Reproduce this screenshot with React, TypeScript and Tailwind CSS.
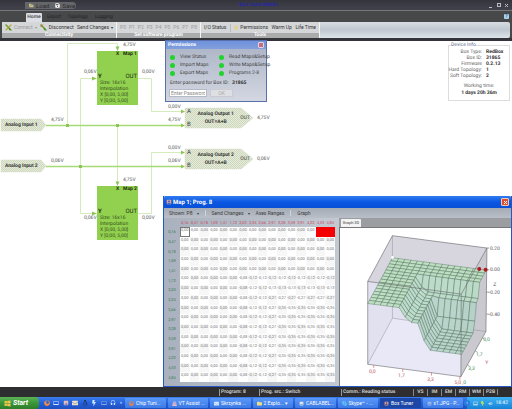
import React from "react";
import {
  FaBirthdayCake,
  FaBolt,
  FaEnvelope,
  FaFirefox,
  FaFolder,
  FaFolderOpen,
  FaLinux,
  FaSave,
  FaSkype,
  FaWindows,
} from "react-icons/fa";
import {
  MdAccountBox,
  MdComputer,
  MdHeadset,
  MdImage,
  MdVolumeUp,
} from "react-icons/md";

const axis = [
  "0,16", "0,47", "0,78", "1,09", "1,41", "1,72", "2,03", "2,34",
  "2,66", "2,97", "3,28", "3,59", "3,91", "4,22", "4,53", "4,84",
];

// lowest value allowed per column and per row, the cell takes the higher one
const colLimit = [
  0, 0, 0, 0, 0, 0, -0.08, -0.12, -0.12, -0.27, -0.35, -0.35, -0.35, -0.35,
  -0.35, -0.35,
];
const rowLimit = [
  0, 0, 0, 0, 0, -0.12, -0.13, -0.27, -0.35, -0.35, -0.35, -0.35, -0.35,
  -0.35, -0.35, -0.35,
];
const valueAt = (col: number, row: number) =>
  Math.max(colLimit[col], rowLimit[row]);

function Plug({ off }: { off?: boolean }) {
  return (
    <svg viewBox="0 0 12 12" className="size-[7px] shrink-0">
      <path d="M1 1 L11 11" stroke="#6f9a2c" strokeWidth="2.4" />
      {!off && <path d="M11 1 L1 11" stroke="#b7a437" strokeWidth="2.2" />}
      <path d="M6 5 L10 9 L7 11 Z" fill="#3f8f2a" />
      {off && <path d="M1 5 L5 1" stroke="#c2562c" strokeWidth="1.6" />}
    </svg>
  );
}

function Group({
  title,
  children,
  className,
}: {
  title: string;
  children: React.ReactNode;
  className: string;
}) {
  return (
    <section
      className={`flex flex-col border-r border-[#f4f4f4] ${className}`}
    >
      <div className="flex flex-1 items-center justify-between px-[3px] whitespace-nowrap">
        {children}
      </div>
      <h2 className="h-[5px] bg-[#a9abac] text-center text-[5px] leading-[5px] font-bold text-white">
        {title}
      </h2>
    </section>
  );
}

function Header() {
  return (
    <header className="bg-[#47484a]">
      <div className="flex h-[11px] items-center border-b border-[#77787c] bg-linear-to-b from-[#34353c] to-[#41424c]">
        <div className="ml-[25px] flex h-[7px] w-[51px] items-center gap-[6px] rounded-r-full bg-[#65666a] px-1 text-[#2c2c2c]">
          <button className="flex items-center gap-[2px]">
            <FaFolderOpen className="size-[5px] text-[#c9c08c]" />
            Load
          </button>
          <button className="flex items-center gap-[2px]">
            <FaSave className="size-[5px] text-white" />
            Save
          </button>
        </div>
        <h1 className="flex-1 text-center text-[5px] text-[#1d1dd0]">
          Box Tuner Mobile
        </h1>
        <div className="mr-[3px] ml-[48px] flex gap-[3px] text-[#b9bcc6]">
          <button aria-label="Minimize" className="flex size-[5px] items-end">
            <span className="h-px w-[3px] bg-current" />
          </button>
          <button
            aria-label="Maximize"
            className="size-[4px] border border-current"
          />
          <button aria-label="Close" className="size-[5px]">
            <svg viewBox="0 0 5 5" stroke="currentColor">
              <path d="M1 1 L4 4 M4 1 L1 4" />
            </svg>
          </button>
        </div>
      </div>

      <nav className="flex h-[11px] items-end pl-[26px] text-[5px] text-[#242424]">
        <a
          href="#home"
          className="h-[9px] w-[16px] rounded-t-[1px] bg-[#dcdfe3] text-center leading-[9px] font-bold text-[#555]"
        >
          Home
        </a>
        <a href="#export" className="ml-[5px] leading-[9px]">
          Export
        </a>
        <a href="#topology" className="ml-[6px] leading-[9px]">
          Topology
        </a>
        <a href="#logging" className="ml-[7px] leading-[9px]">
          Logging
        </a>
        <button
          aria-label="Help"
          className="mr-[3px] mb-[3px] ml-auto flex size-[5px] items-center justify-center rounded-[1px] bg-[#a9d0ee] text-[5px] leading-[5px] text-[#16406c]"
        >
          ?
        </button>
      </nav>

      <div className="mx-[2px] flex h-[16px] rounded-[2px] bg-linear-to-b from-[#d8dce2] via-[#c0c7d0] to-[#dde5eb] text-[5px] text-[#333]">
        <Group title="Connectivity" className="w-[115px] bg-[#d4d6d8]">
          <button className="flex items-center gap-[2px] text-[#9a9a9a]">
            <Plug />
            Connect
            <span className="text-[4px]">▾</span>
          </button>
          <button className="flex items-center gap-[2px]">
            <Plug off />
            Disconnect
          </button>
          <button className="flex items-center gap-[2px]">
            Send Changes
            <span className="text-[4px]">▾</span>
          </button>
        </Group>
        <Group title="Set software program" className="w-[84px] bg-[#d4d6d8]">
          {["P0", "P1", "P2", "P3", "P4", "P5", "P6", "P7", "P8"].map((p) => (
            <button key={p} className="text-[#9c9c9c]">
              {p}
            </button>
          ))}
        </Group>
        <Group title="Tools" className="w-[119px] bg-[#d4d6d8]">
          <button>I/O Status</button>
          <span className="h-[8px] w-px bg-[#bcbcbc]" />
          <button className="flex items-center gap-[2px]">
            <span className="h-[5px] w-[4px] rounded-full bg-[#e3cf9a]" />
            Permissions
          </button>
          <button>Warm Up</button>
          <button>Life Time</button>
        </Group>
      </div>
      <div className="h-[3px] bg-[#33343a]" />
    </header>
  );
}

function Wires() {
  return (
    <svg
      className="absolute top-0 left-0"
      width="280"
      height="210"
      fill="none"
    >
      <defs>
        <pattern
          id="hatch"
          width="2"
          height="2"
          patternUnits="userSpaceOnUse"
        >
          <rect width="2" height="2" fill="#e6ecd9" />
          <path d="M0 2 L2 0" stroke="#c3cfb0" strokeWidth="0.7" />
        </pattern>
      </defs>
      <g stroke="#d3ebbd" strokeWidth="1">
        <path d="M67.5 84 V2.5 H117.5 V6" />
        <path d="M117.5 84 V141" />
        <path d="M80.5 125 V37.5 H93" />
        <path d="M80.5 125 V172.5 H93" />
        <path d="M138 37.5 H151.5 V70.5 H181" />
        <path d="M138 172.5 H151.5 V111.5 H181" />
      </g>
      <g stroke="#a6da76" strokeWidth="1.4">
        <path d="M46 84.5 H182" />
        <path d="M46 125.5 H182" />
      </g>
      <g fill="#8cc556">
        <rect x="66" y="83" width="3" height="3" />
        <rect x="116" y="83" width="3" height="3" />
        <rect x="79" y="124" width="3" height="3" />
        <path d="M115.500 5.500 H119.500 L117.500 10 Z" />
        <path d="M115.500 140.500 H119.500 L117.500 145 Z" />
        <path d="M92 35.500 V39.500 L97 37.500 Z" />
        <path d="M92 170.500 V174.500 L97 172.500 Z" />
        <path d="M181 68.500 V72.500 L185 70.500 Z" />
        <path d="M181 82.500 V86.500 L185 84.500 Z" />
        <path d="M181 109.500 V113.500 L185 111.500 Z" />
        <path d="M181 123.500 V127.500 L185 125.500 Z" />
      </g>
      <g fill="url(#hatch)" stroke="#d5decb" strokeWidth="0.5">
        <path d="M1 78 H41 L46 84 L41 90 H1 Z" />
        <path d="M1 119 H41 L46 125 L41 131 H1 Z" />
        <path d="M185 67 H241 L253 77 L241 87 H185 Z" />
        <path d="M185 108 H241 L253 118 L241 128 H185 Z" />
      </g>
    </svg>
  );
}

function MapNode({ name, className }: { name: string; className: string }) {
  return (
    <div
      className={`absolute left-[97px] h-[54px] w-[41px] bg-[#92d050] px-[3px] whitespace-nowrap text-[#35521c] ${className}`}
    >
      <div className="-mr-[2px] flex h-[7px] justify-between pl-[16px] text-[5px] font-bold text-[#1e2e10]">
        <span>X</span>
        <span>{name}</span>
      </div>
      <div className="-mx-[2px] mt-[16px] flex justify-between leading-[6px] text-[#1e2e10]">
        <b>Y</b>
        <span>OUT</span>
      </div>
      <p className="text-[5px] leading-[6px]">
        Size: 16x16
        <br />
        Interpolation
        <br />
        X [0,00, 5,00]
        <br />Y [0,00, 5,00]
      </p>
    </div>
  );
}

function OutputNode({ name, className }: { name: string; className: string }) {
  return (
    <div
      className={`absolute left-[185px] flex h-[20px] w-[65px] items-center text-[#333] ${className}`}
    >
      <div className="flex h-full flex-col justify-between pl-[2px]">
        <span>A</span>
        <span>B</span>
      </div>
      <div className="flex-1 text-center text-[5px] leading-[8px] font-bold whitespace-nowrap">
        {name}
        <br />
        OUT=A+B
      </div>
      <span className="text-[5px]">OUT</span>
    </div>
  );
}

const voltages = [
  { text: "4,75V", className: "top-[1px] left-[123px]" },
  { text: "0,06V", className: "top-[28px] left-[84px]" },
  { text: "0,00V", className: "top-[28px] left-[142px]" },
  { text: "4,75V", className: "top-[76px] left-[51px]" },
  { text: "0,06V", className: "top-[117px] left-[51px]" },
  { text: "0,00V", className: "top-[63px] left-[168px]" },
  { text: "4,75V", className: "top-[76px] left-[168px]" },
  { text: "4,75V", className: "top-[74px] left-[257px]" },
  { text: "0,00V", className: "top-[104px] left-[168px]" },
  { text: "0,06V", className: "top-[117px] left-[168px]" },
  { text: "0,06V", className: "top-[115px] left-[257px]" },
  { text: "4,75V", className: "top-[136px] left-[123px]" },
  { text: "0,06V", className: "top-[174px] left-[84px]" },
  { text: "0,00V", className: "top-[174px] left-[142px]" },
];

function Diagram() {
  return (
    <>
      <Wires />
      <div className="absolute top-[81px] left-[5px] text-[5px] font-bold whitespace-nowrap text-[#333]">
        Analog Input 1
      </div>
      <div className="absolute top-[122px] left-[5px] text-[5px] font-bold whitespace-nowrap text-[#333]">
        Analog Input 2
      </div>
      <MapNode name="Map 1" className="top-[10px]" />
      <MapNode name="Map 2" className="top-[145px]" />
      <OutputNode name="Analog Output 1" className="top-[67px]" />
      <OutputNode name="Analog Output 2" className="top-[108px]" />
      {voltages.map((v, i) => (
        <span
          key={i}
          className={`absolute text-[5px] text-[#555] ${v.className}`}
        >
          {v.text}
        </span>
      ))}
    </>
  );
}

function Permissions() {
  return (
    <section className="absolute -top-px left-[165px] w-[102px] border border-[#5870ae] bg-linear-to-b from-[#aab2c4] to-[#d3d7e2] text-[5px] text-[#444]">
      <div className="flex h-[8px] items-center justify-between bg-linear-to-b from-[#6f92dc] to-[#829fdc] px-[2px] text-white">
        <b>Permissions</b>
        <button
          aria-label="Close permissions"
          className="flex size-[6px] items-center justify-center rounded-[1px] border border-[#e3d3dd] bg-[#bd6f83]"
        />
      </div>
      <ul className="mt-[5px] grid grid-cols-[49px_1fr] gap-y-[1px] pl-[4px] leading-[7px] whitespace-nowrap">
        {[
          "View Status",
          "Read Maps&Setup",
          "Import Maps",
          "Write Maps&Setup",
          "Export Maps",
          "Programs 2-8",
        ].map((item) => (
          <li key={item} className="flex items-center gap-[5px]">
            <span className="size-[5px] rounded-full bg-[#1fd52b]" />
            {item}
          </li>
        ))}
      </ul>
      <label htmlFor="password" className="mt-[3px] block pl-[4px]">
        Enter password for Box ID:{" "}
        <b className="ml-[2px] text-[#333]">31865</b>
      </label>
      <div className="mt-[2px] mb-[4px] flex gap-[3px] pl-[3px]">
        <input
          id="password"
          placeholder="Enter Password"
          className="h-[8px] w-[38px] border border-[#b5bac8] bg-white px-px placeholder:text-[#888]"
        />
        <button className="h-[8px] w-[23px] border border-[#c9cbd0] bg-[#dddfe3] leading-[6px] text-[#aaa]">
          OK
        </button>
      </div>
    </section>
  );
}

function DeviceInfo() {
  const rows = [
    ["Box Type:", "RedBox"],
    ["Box ID:", "31865"],
    ["Firmware", "0.2.13"],
    ["Hard Topology:", "1"],
    ["Soft Topology:", "2"],
  ];
  return (
    <fieldset className="mt-px mr-[2px] ml-auto w-[62px] border border-[#dcdcdc] pb-[3px] text-[5px] text-[#666]">
      <legend className="ml-[2px] text-[#5b6f8f]">Device Info</legend>
      <dl className="grid grid-cols-[33px_1fr] gap-x-[4px] leading-[6px] whitespace-nowrap">
        {rows.map(([k, v]) => (
          <React.Fragment key={k}>
            <dt className="flex justify-end">{k}</dt>
            <dd className="font-bold text-[#333]">{v}</dd>
          </React.Fragment>
        ))}
      </dl>
      <p className="mt-[4px] text-center leading-[7px]">
        Working time:
        <br />
        <b className="text-[#333]">1 days 20h 36m</b>
      </p>
    </fieldset>
  );
}

// projects a map cell onto the drawing
function project(col: number, row: number, z: number) {
  const x = 172 + (col / 15) * 281 - (row / 15) * 74;
  const y = 138 + (col / 15) * 37 + (row / 15) * 137 + (0.2 - z) * 330;
  return `${x.toFixed(1)},${y.toFixed(1)}`;
}

function Surface() {
  const cells: React.ReactNode[] = [];
  for (let r = 0; r < 15; r++) {
    for (let c = 0; c < 15; c++) {
      const z = valueAt(c + 1, r + 1);
      const points = [
        [c, r],
        [c + 1, r],
        [c + 1, r + 1],
        [c, r + 1],
      ]
        .map(([a, b]) => project(a, b, valueAt(a, b)))
        .join(" ");
      cells.push(
        <polygon
          key={`${c}-${r}`}
          points={points}
          fill={z < -0.2 ? "#b4d3c6" : z < -0.05 ? "#b9dcc6" : "#bbe0bf"}
        />
      );
    }
  }
  return (
    <g stroke="#4c6a57" strokeWidth="1.2" fillOpacity="0.9">
      {cells}
    </g>
  );
}

function Graph() {
  return (
    <svg
      viewBox="15 115 512 470"
      className="block h-auto w-full bg-white"
      role="img"
      aria-label="Graph 3D"
    >
      <path d="M172 138 L455 175 L452 425 L172 385 Z" fill="#e2e1ef" />
      <path d="M172 138 L98 275 L98 523 L172 385 Z" fill="#e2e1ef" />
      <path d="M172 385 L452 425 L377 560 L98 523 Z" fill="#e9e8f7" />
      <path d="M172 138 L455 175 L378 313 L98 275 Z" fill="#d7d6df" />
      <path d="M455 175 L378 313 L377 560 L452 425 Z" fill="#c9c9cf" />
      <g fill="none" stroke="#8e8e96" strokeWidth="1.5">
        <path d="M172 138 V385 L452 425 M172 385 L98 523" />
      </g>
      <Surface />
      <g fill="none" stroke="#66666c" strokeWidth="1.8">
        <path d="M172 138 L455 175 L378 313 L98 275 Z" />
        <path d="M98 275 V523 L377 560 L452 425 L455 175 M378 313 L377 560" />
      </g>
      <path
        d="M453 175 h9 M453 240 h9 M453 307 h9 M453 373 h9"
        stroke="#777"
        strokeWidth="2"
      />
      <path
        d="M116 525 v9 M203 537 v9 M289 548 v9 M374 560 v9"
        stroke="#c66"
        strokeWidth="2"
      />
      <path
        d="M441 444 l7 4 M420 483 l7 4 M396 525 l7 4"
        stroke="#6a9a78"
        strokeWidth="2"
      />
      <circle cx="172" cy="203" r="4" fill="#fff" />
      <circle cx="432" cy="238" r="6" fill="#b01722" />
      <circle cx="451" cy="240" r="6" fill="#b01722" />
      <g fontSize="15" fill="#555">
        <text x="464" y="180">0.20</text>
        <text x="464" y="245">0.00</text>
        <text x="460" y="312">-0.20</text>
        <text x="460" y="378">-0.40</text>
        <text x="474" y="290">Z</text>
      </g>
      <g fontSize="15" fill="#b8505a">
        <text x="102" y="549">0,0</text>
        <text x="189" y="561">1,7</text>
        <text x="276" y="573">3,3</text>
        <text x="358" y="581">5,0</text>
        <text x="450" y="521">Y</text>
      </g>
      <g fontSize="15" fill="#4a8a5e">
        <text x="444" y="454">0,0</text>
        <text x="422" y="497">1,7</text>
        <text x="399" y="541">3,3</text>
        <text x="381" y="581">,0</text>
      </g>
    </svg>
  );
}

function MapWindow() {
  return (
    <section className="absolute right-0 bottom-0 w-[349px] border-x border-b border-[#2358c4] bg-[#b4bac4]">
      <div className="flex h-[12px] items-center rounded-t-[2px] bg-linear-to-b from-[#2f7bf0] via-[#0a57e2] to-[#0950d6] px-[2px] text-white">
        <MdAccountBox className="size-[6px] text-[#e8a08a]" />
        <h2 className="ml-px text-[6px] font-bold">Map 1; Prog. 8</h2>
        <button
          aria-label="Close map"
          className="ml-auto flex size-[8px] items-center justify-center rounded-[1px] border border-[#f0c8bd] bg-[#d8502c]"
        >
          <svg viewBox="0 0 5 5" className="size-[5px]" stroke="#fff">
            <path d="M1 1 L4 4 M4 1 L1 4" />
          </svg>
        </button>
      </div>
      <div className="flex h-[10px] items-center gap-[6px] bg-linear-to-b from-[#a5acb6] to-[#b9bec7] pl-[5px] text-[5px] text-[#3c3c3c]">
        <button className="flex gap-[4px]">
          Shown: P8 <span className="text-[4px]">▾</span>
        </button>
        <span className="h-[6px] w-px bg-[#cfd3da]" />
        <button className="flex gap-[4px]">
          Send Changes <span className="text-[4px]">▾</span>
        </button>
        <button>Axes Ranges</button>
        <span className="h-[6px] w-px bg-[#cfd3da]" />
        <button>Graph</button>
      </div>
      <div className="flex">
        <div className="w-[175px] shrink-0 bg-linear-to-r from-[#a8b1bd] to-[#c3c9d2] pr-[4px] pb-[4px]">
          <table className="h-[164px] w-full table-fixed border-collapse text-[4px] leading-[5px]">
            <thead>
              <tr className="h-[9px] text-[#c9485a]">
                <th className="w-[16px]" />
                {axis.map((a) => (
                  <th key={a} className="p-0 font-normal">
                    {a}
                  </th>
                ))}
              </tr>
            </thead>
            <tbody>
              {axis.map((a, row) => (
                <tr key={a}>
                  <th className="p-0 font-normal text-[#3f7a52]">{a}</th>
                  {axis.map((b, col) => {
                    const hot = row === 0 && col > 13;
                    const first = row === 0 && col === 0;
                    const shade = hot
                      ? "bg-[#f50000] text-[#f50000]"
                      : first
                        ? "bg-white text-[#777] outline outline-[#777] -outline-offset-1"
                        : (row + col) % 2
                          ? "bg-white text-[#777]"
                          : "bg-[#f7f7f7] text-[#777]";
                    return (
                      <td key={b} className={`p-0 text-center align-top ${shade}`}>
                        {valueAt(col, row).toFixed(2).replace(".", ",")}
                      </td>
                    );
                  })}
                </tr>
              ))}
            </tbody>
          </table>
        </div>
        <div className="flex min-w-0 flex-1 flex-col bg-[#9b9da1]">
          <button className="mt-px ml-[2px] h-[8px] w-[20px] rounded-t-[1px] bg-[#f3f3f3] text-[4px] leading-[8px] whitespace-nowrap text-[#444]">
            Graph 3D
          </button>
          <div className="flex-1 border-t border-l border-[#777] bg-white">
            <Graph />
          </div>
        </div>
      </div>
    </section>
  );
}

function StatusBar() {
  return (
    <div className="flex h-[10px] items-center bg-[#2e2e30] text-[5px] font-semibold whitespace-nowrap text-[#d6d6d6]">
      <div className="flex-1" />
      <div className="w-[40px] border-l border-[#999] pl-px">Program: 8</div>
      <div className="w-[82px] border-l border-[#999] pl-px">
        Prog. src.: Switch
      </div>
      <div className="w-[72px] border-l border-[#999] pl-px">
        Comm.: Reading status
      </div>
      {["VS", "IM", "EM", "RM", "WM", "P2B"].map((s) => (
        <div key={s} className="w-[14px] border-l border-[#888] text-center">
          {s}
        </div>
      ))}
      <div className="h-[6px] w-[15px] border-l border-[#888]" />
    </div>
  );
}

const tasks = [
  { icon: <FaFirefox className="text-[#e8824a]" />, text: "Chip Tuni..." },
  { icon: <FaBirthdayCake className="text-[#f2b9c4]" />, text: "VT Assist ..." },
  { icon: <FaEnvelope className="text-[#dbe9ff]" />, text: "Skrzynka ..." },
  { icon: <FaFolder className="text-[#f1de83]" />, text: "2 Explo...  ▾" },
  { icon: <MdImage className="text-[#e6e6e0]" />, text: "CABLABEL..." },
  { icon: <FaSkype className="text-[#6cd0fa]" />, text: "Skype™ - ..." },
  { icon: <MdAccountBox className="text-[#e8a08a]" />, text: "Box Tuner" },
  { icon: <MdImage className="text-[#9fb9e2]" />, text: "x1.JPG - P..." },
];

function Taskbar() {
  return (
    <footer className="flex h-[12px] items-center bg-linear-to-b from-[#3b7ef0] via-[#2460da] to-[#1e50c0] text-[5px] whitespace-nowrap text-white">
      <button className="flex h-full w-[39px] items-center gap-[2px] rounded-r-[4px] bg-linear-to-b from-[#5cb356] via-[#3b9637] to-[#2c7d2a] pl-[4px] text-[7px] font-bold italic">
        <FaWindows className="size-[7px] text-[#f3c54b]" />
        Start
      </button>
      <div className="flex w-[86px] items-center justify-between pr-[3px] pl-[5px] text-[6px]">
        <FaFirefox className="text-[#ef8b45]" />
        <MdComputer className="text-[#d8e6fa]" />
        <MdImage className="text-[#e7b8b8]" />
        <FaEnvelope className="text-[#f0e2c0]" />
        <FaLinux className="text-[#1b1b1b]" />
        <FaBolt className="text-[#cfe3ff]" />
        <MdComputer className="text-[#8ea8d8]" />
        <MdHeadset className="text-[#d6e5fb]" />
        <span className="text-[5px]">»</span>
      </div>
      <div className="flex min-w-0 flex-1 gap-[2px]">
        {tasks.map((t) => (
          <button
            key={t.text}
            className={`flex h-[10px] min-w-0 flex-1 items-center gap-[2px] rounded-[1px] pl-[4px] ${
              t.text === "Box Tuner"
                ? "bg-[#1c47a6]"
                : "bg-linear-to-b from-[#5a98f8] to-[#3b7ae6]"
            }`}
          >
            {t.icon}
            {t.text}
          </button>
        ))}
      </div>
      <div className="ml-[4px] flex h-full w-[45px] items-center justify-between bg-linear-to-b from-[#3fb2f4] to-[#1583d6] pr-[4px]">
        <span className="-ml-[3px] flex size-[6px] items-center justify-center rounded-full bg-[#2a7ee0] text-[5px] leading-[5px]">
          ‹
        </span>
        <MdComputer className="text-[#e8f3ff]" />
        <FaBolt className="text-[#b8e25a]" />
        <MdVolumeUp className="text-[#dfe5ee]" />
        <time>18:42</time>
      </div>
    </footer>
  );
}

export default function App() {
  return (
    <div className="flex min-h-screen flex-col overflow-hidden bg-white font-['Roboto','Noto_Sans',sans-serif] text-[6px] leading-[7px] [text-rendering:geometricPrecision]">
      <Header />
      <main className="relative flex min-h-[346px] flex-1 flex-col">
        <Diagram />
        <Permissions />
        <DeviceInfo />
        <MapWindow />
      </main>
      <StatusBar />
      <Taskbar />
    </div>
  );
}
